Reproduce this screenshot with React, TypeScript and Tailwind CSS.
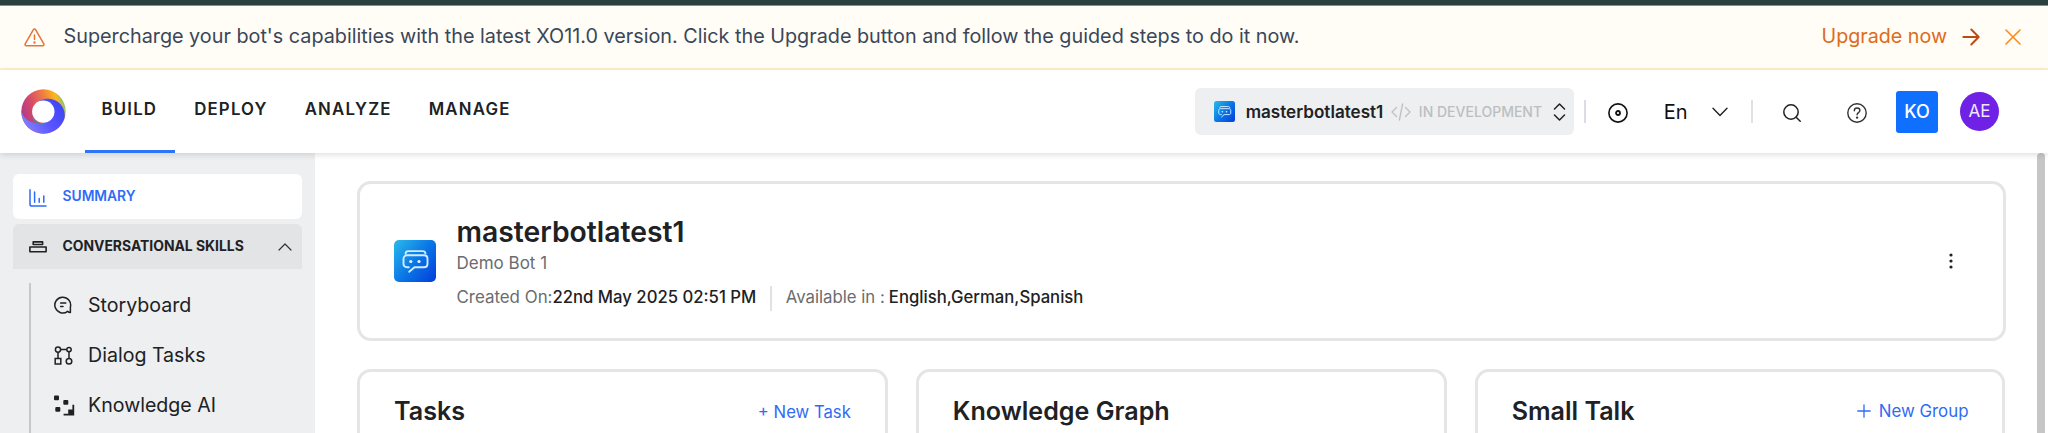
import type { ReactNode } from 'react';

function BotIcon({ className, id }: { className: string; id: string }) {
  return (
    <svg viewBox="0 0 42 42" className={className} fill="none">
      <defs>
        <linearGradient id={id} x1="0" y1="4" x2="42" y2="38" gradientUnits="userSpaceOnUse">
          <stop stopColor="#27b5ea" />
          <stop offset="0.5" stopColor="#0b78e6" />
          <stop offset="1" stopColor="#0341dc" />
        </linearGradient>
      </defs>
      <rect width="42" height="42" rx="5" fill={`url(#${id})`} />
      <g stroke="#d3ebff" strokeWidth="1.9" strokeLinecap="round" strokeLinejoin="round">
        <path d="M11.5 13.6c.2-1.800 1-2.500 2.600-2.500h14.800c1.600 0 2.400.7 2.600 2.500" />
        <path d="M14.800 27.200h-1.800c-2 0-3.500-1.300-3.500-3.300v-5.100c0-2 1.500-3.500 3.500-3.500h17c2 0 3.500 1.500 3.500 3.500v5.100c0 2-1.500 3.300-3.500 3.300h-9.500l-5.300 4.600" />
      </g>
      <circle cx="16.800" cy="21.500" r="1.600" fill="#e3f3ff" />
      <circle cx="25" cy="21.500" r="1.600" fill="#e3f3ff" />
    </svg>
  );
}

function Logo() {
  return (
    <svg viewBox="0 0 45 45" className="size-[45px]">
      <defs>
        <linearGradient id="warm" x1="0" y1="26" x2="42" y2="12" gradientUnits="userSpaceOnUse">
          <stop stopColor="#b03a86" />
          <stop offset="0.3" stopColor="#d5496a" />
          <stop offset="0.6" stopColor="#ee7a45" />
          <stop offset="0.88" stopColor="#fdb81a" />
          <stop offset="1" stopColor="#8cc07a" />
        </linearGradient>
        <linearGradient id="cool" x1="4" y1="38" x2="40" y2="14" gradientUnits="userSpaceOnUse">
          <stop stopColor="#8080ff" />
          <stop offset="0.5" stopColor="#5a55ff" />
          <stop offset="1" stopColor="#3d45f5" />
        </linearGradient>
      </defs>
      <circle cx="22.500" cy="22.500" r="22.200" fill="url(#warm)" />
      <path d="M.4 22.500a22.100 22.100 0 0 0 43.200 6.500c1.500-10.500-6-19-16-19.300-3-.1-6 .5-8.500 1.800l4 23C13 35.500 3.500 32 .4 22.500Z" fill="url(#cool)" />
      <path d="M12 29c2 4 6 6.500 11 6" stroke="#4a8aa0" strokeWidth="1.500" fill="none" />
      <circle cx="22.300" cy="22.600" r="11.200" fill="#fff" />
    </svg>
  );
}

const IconSummary = () => (
  <svg viewBox="0 0 18 18" className="size-[18px]" fill="none" stroke="#2f6bf6" strokeWidth="1.500" strokeLinecap="round">
    <path d="M1 .8v14.400c0 1.300.6 1.900 1.900 1.900H17M5.600 3v10.300M10.200 9.500v3.800M14.800 7v6.300" />
  </svg>
);

const IconSkills = () => (
  <svg viewBox="0 0 18 12" className="h-[12px] w-[18px]" fill="none" stroke="#202124" strokeWidth="1.600" strokeLinejoin="round">
    <path d="M4.200.9h9.400v2.600H4.200zM.9 6h16.200v4.800H.9z" />
  </svg>
);

const IconStory = () => (
  <svg viewBox="0 0 18 18" className="size-[18px]" fill="none" stroke="#202124" strokeWidth="1.500" strokeLinecap="round" strokeLinejoin="round">
    <path d="M13.600 15.300A7.900 7.900 0 1 1 16.400 11v5.600c-1.100 0-2-.4-2.800-1.300ZM6.600 7.100h5.200M6.600 10.400H9" />
  </svg>
);

const IconDialog = () => (
  <svg viewBox="0 0 19 19" className="size-[19px]" fill="none" stroke="#202124" strokeWidth="1.500">
    <circle cx="4" cy="3.600" r="2.600" />
    <circle cx="15" cy="3.600" r="2.200" />
    <circle cx="15" cy="15.200" r="2.800" />
    <path d="M1.200 12.600h5.600v5.400H1.200zM6.600 3.600h6.200M4 6.200v6.400M15 5.800v6.600" />
  </svg>
);

const IconKnowledge = () => (
  <svg viewBox="0 0 21 21" className="size-[21px]" fill="#202124">
    <rect x="0" y="0.500" width="5" height="4.800" rx="1" />
    <rect x="9.300" y="5" width="5" height="4.800" rx="1" />
    <rect x="1.300" y="12" width="5" height="4.800" rx="1" />
    <path d="M18.400 9.800h1.800v10.600H9.600v-1.700h4.600v-4.100h4.200z" />
  </svg>
);

function Tab({ label, active }: { label: string; active?: boolean }) {
  return (
    <div className={`flex h-full items-center border-b-[3px] pl-[16.5px] pr-[17.5px] ${active ? 'border-[#2f74f5]' : 'border-transparent'}`}>
      <span className="text-[16.8px] font-semibold tracking-[1.2px] text-[#202124]">{label}</span>
    </div>
  );
}

function TreeItem({ icon, label }: { icon: ReactNode; label: string }) {
  return (
    <div className="flex h-[50.4px] shrink-0 items-center">
      <span className="ml-[23px] flex w-[34px] items-center">{icon}</span>
      <span className="text-[19.6px] text-[#202124]">{label}</span>
    </div>
  );
}

function Card({ title, action }: { title: string; action?: ReactNode }) {
  return (
    <section className="flex h-[200px] flex-1 items-start justify-between rounded-[14px] border-[3px] border-[#e4e5e6] pl-[34px] pr-[34px] pt-[23px]">
      <h2 className="text-[25.1px] font-semibold leading-8 text-[#202124]">{title}</h2>
      {action}
    </section>
  );
}

export default function App() {
  return (
    <div className="flex h-[433px] w-full flex-col overflow-hidden whitespace-nowrap bg-white font-['Inter',sans-serif]">
      <div className="h-[6px] shrink-0 border-b border-[#8b8d8a] bg-[#2a413f]" />

      <div className="flex h-[64px] shrink-0 items-center border-b-2 border-[#feefca] bg-[#fffdf5] pl-6">
        <svg viewBox="0 0 21 19" className="h-[19px] w-[21px]" fill="none" stroke="#e2763a" strokeWidth="1.500" strokeLinecap="round" strokeLinejoin="round">
          <path d="M9.400 1.600c.5-.9 1.700-.9 2.200 0l8.200 14.300c.5.9-.1 1.900-1.100 1.900H2.300c-1 0-1.600-1-1.100-1.900ZM10.500 7v4.600" />
          <circle cx="10.500" cy="14.500" r="0.450" fill="#e2763a" />
        </svg>
        <p className="ml-[18.500px] text-[19.79px] text-[#3a4659]">
          Supercharge your bot's capabilities with the latest XO11.0 version. Click the Upgrade button and follow the guided steps to do it now.
        </p>
        <div className="ml-auto flex items-center pr-[27px]">
          <span className="text-[19.7px] text-[#dd6b1c]">Upgrade now</span>
          <svg viewBox="0 0 18 18" className="ml-[15px] size-[18px]" fill="none" stroke="#bd4a14" strokeWidth="1.900" strokeLinecap="round" strokeLinejoin="round">
            <path d="M1.300 9h15.400M9.300 1.500 16.700 9l-7.400 7.500" />
          </svg>
          <svg viewBox="0 0 16 16" className="ml-[25px] size-[16px]" fill="none" stroke="#f98c1d" strokeWidth="1.600" strokeLinecap="round">
            <path d="m1 1 14 14M15 1 1 15" />
          </svg>
        </div>
      </div>

      <header className="relative z-10 flex h-[83px] shrink-0 items-center bg-white pl-[21px] shadow-[0_2px_6px_rgba(0,0,0,0.13)]">
        <Logo />
        <nav className="ml-[19px] flex h-full gap-[3px]">
          <Tab label="BUILD" active />
          <Tab label="DEPLOY" />
          <Tab label="ANALYZE" />
          <Tab label="MANAGE" />
        </nav>
        <div className="ml-auto flex items-center pr-[49px]">
          <div className="flex h-[47px] w-[379px] items-center rounded-[6px] bg-[#eeeff0] pl-[19px]">
            <BotIcon className="size-[21px]" id="botSmall" />
            <span className="ml-[11px] text-[17.1px] font-semibold text-[#202124]">masterbotlatest1</span>
            <svg viewBox="0 0 20 18" className="ml-[8px] h-[18px] w-[20px]" fill="none" stroke="#bfc2c5" strokeWidth="1.400" strokeLinecap="round" strokeLinejoin="round">
              <path d="M5.500 4.500 1 9l4.500 4.500M14.500 4.500 19 9l-4.500 4.500M11.600 1 8.400 17" />
            </svg>
            <span className="ml-[7.500px] text-[14px] font-medium text-[#bcbec1]">IN DEVELOPMENT</span>
            <svg viewBox="0 0 13 18" className="ml-[11px] h-[18px] w-[13px]" fill="none" stroke="#202124" strokeWidth="1.500" strokeLinecap="round" strokeLinejoin="round">
              <path d="m1.500 6 5-5 5 5M1.500 12l5 5 5-5" />
            </svg>
          </div>
          <div className="ml-[10px] h-[23px] w-[2px] bg-[#dbdde6]" />
          <svg viewBox="0 0 20 20" className="ml-[22px] mt-[3px] size-[20px]" fill="none" stroke="#111" strokeWidth="1.600">
            <circle cx="10" cy="10" r="9.100" />
            <circle cx="10" cy="10" r="2" strokeWidth="1.800" />
          </svg>
          <span className="ml-[36px] text-[20px] text-[#111]">En</span>
          <svg viewBox="0 0 16 10" className="ml-[24.5px] h-[10px] w-[16px]" fill="none" stroke="#202124" strokeWidth="1.400" strokeLinecap="round" strokeLinejoin="round">
            <path d="m1 1.300 7 7.200 7-7.200" />
          </svg>
          <div className="ml-[23px] h-[23px] w-[2px] bg-[#dfe1e3]" />
          <svg viewBox="0 0 18 18" className="ml-[30px] mt-[2px] size-[18px]" fill="none" stroke="#202124" strokeWidth="1.500" strokeLinecap="round">
            <circle cx="8" cy="8" r="7.200" />
            <path d="m13.200 13.200 4 4" />
          </svg>
          <svg viewBox="0 0 20 20" className="ml-[46px] mt-[3px] size-[20px]" fill="none" stroke="#303236" strokeWidth="1.400" strokeLinecap="round" strokeLinejoin="round">
            <circle cx="10" cy="10" r="9.200" />
            <path d="M7.300 7.700c0-1.700 1.200-2.700 2.800-2.700s2.800 1 2.800 2.500c0 2-2.800 2.200-2.800 4.200" />
            <circle cx="10.100" cy="14.600" r="0.500" fill="#303236" />
          </svg>
          <div className="ml-[29px] flex size-[42px] items-center justify-center rounded-[3px] bg-[#0f70ff] text-[18px] font-medium text-white">KO</div>
          <div className="ml-[22px] flex size-[39px] items-center justify-center rounded-full bg-[#6f22e6] text-[17px] text-[#efe8fd]">AE</div>
        </div>
      </header>

      <div className="flex min-h-0 flex-1">
        <aside className="w-[315px] shrink-0 bg-[#edeff0] pl-[12.500px] pr-[13px] pt-[21px]">
          <div className="flex h-[45px] items-center rounded-[6px] bg-white pl-4">
            <span className="mt-[2px]"><IconSummary /></span>
            <span className="ml-4 text-[13.800px] font-semibold text-[#2f6bf6]">SUMMARY</span>
          </div>
          <div className="mt-[5px] flex h-[45px] items-center rounded-t-[6px] bg-[#e3e4e6] pl-4 pr-[10.5px]">
            <IconSkills />
            <span className="ml-4 text-[13.900px] font-bold text-[#202124]">CONVERSATIONAL SKILLS</span>
            <svg viewBox="0 0 14 8" className="ml-auto h-[8px] w-[14px]" fill="none" stroke="#303236" strokeWidth="1.200" strokeLinecap="round" strokeLinejoin="round">
              <path d="m1 7 6-6 6 6" />
            </svg>
          </div>
          <div className="ml-[16.500px] mt-[14px] flex h-[200px] flex-col border-l-2 border-[#c5c7cb]">
            <div className="-mt-[3px] flex flex-col">
              <TreeItem icon={<IconStory />} label="Storyboard" />
              <TreeItem icon={<IconDialog />} label="Dialog Tasks" />
              <TreeItem icon={<IconKnowledge />} label="Knowledge AI" />
            </div>
          </div>
        </aside>

        <main className="flex flex-1 flex-col gap-[28px] pl-[42px] pr-[31.500px] pt-[28px]">
          <section className="flex h-[160px] shrink-0 rounded-[14px] border-[3px] border-[#e4e5e6] pl-[34px] pr-[46px]">
            <div className="flex items-center">
              <BotIcon className="size-[42px]" id="botLarge" />
            </div>
            <div className="ml-[20.5px] pt-[30px]">
              <h1 className="text-[28.300px] font-semibold leading-9 text-[#202124]">masterbotlatest1</h1>
              <p className="mt-[2px] text-[17px] leading-[23px] text-[#6a6c6f]">Demo Bot 1</p>
              <div className="mt-[10px] flex h-[26px] items-center text-[16.800px] text-[#6a6c6f]">
                <span className="text-[16.9px]">Created On:</span>
                <span className="text-[16.7px] font-medium text-[#202124]">22nd May 2025 02:51 PM</span>
                <span className="ml-[14px] h-[25px] w-[1.500px] bg-[#dfe1e3]" />
                <span className="ml-[14px]">Available in :</span>
                <span className="ml-[4px] text-[16.7px] font-medium text-[#202124]">English,German,Spanish</span>
              </div>
            </div>
            <svg viewBox="0 0 12 18" className="my-auto ml-auto h-[18px] w-[12px]" fill="#202124">
              <circle cx="6" cy="3" r="1.600" />
              <circle cx="6" cy="9" r="1.600" />
              <circle cx="6" cy="15" r="1.600" />
            </svg>
          </section>

          <div className="flex gap-[28px]">
            <Card title="Tasks" action={<span className="mt-[1px] text-[16.700px] leading-8 text-[#2f6bf6]">+ New Task</span>} />
            <Card title="Knowledge Graph" />
            <Card
              title="Small Talk"
              action={
                <span className="flex items-center gap-[7.500px] text-[16.850px] leading-8 text-[#2f6bf6]">
                  <svg viewBox="0 0 14 14" className="size-[14px]" stroke="#2f6bf6" strokeWidth="1.300" strokeLinecap="round">
                    <path d="M7 .8v12.400M.8 7h12.400" />
                  </svg>
                  New Group
                </span>
              }
            />
          </div>
        </main>
        <div className="mr-[3px] w-[8px] shrink-0 rounded-t-full bg-[#c6c6c6]" />
      </div>
    </div>
  );
}
